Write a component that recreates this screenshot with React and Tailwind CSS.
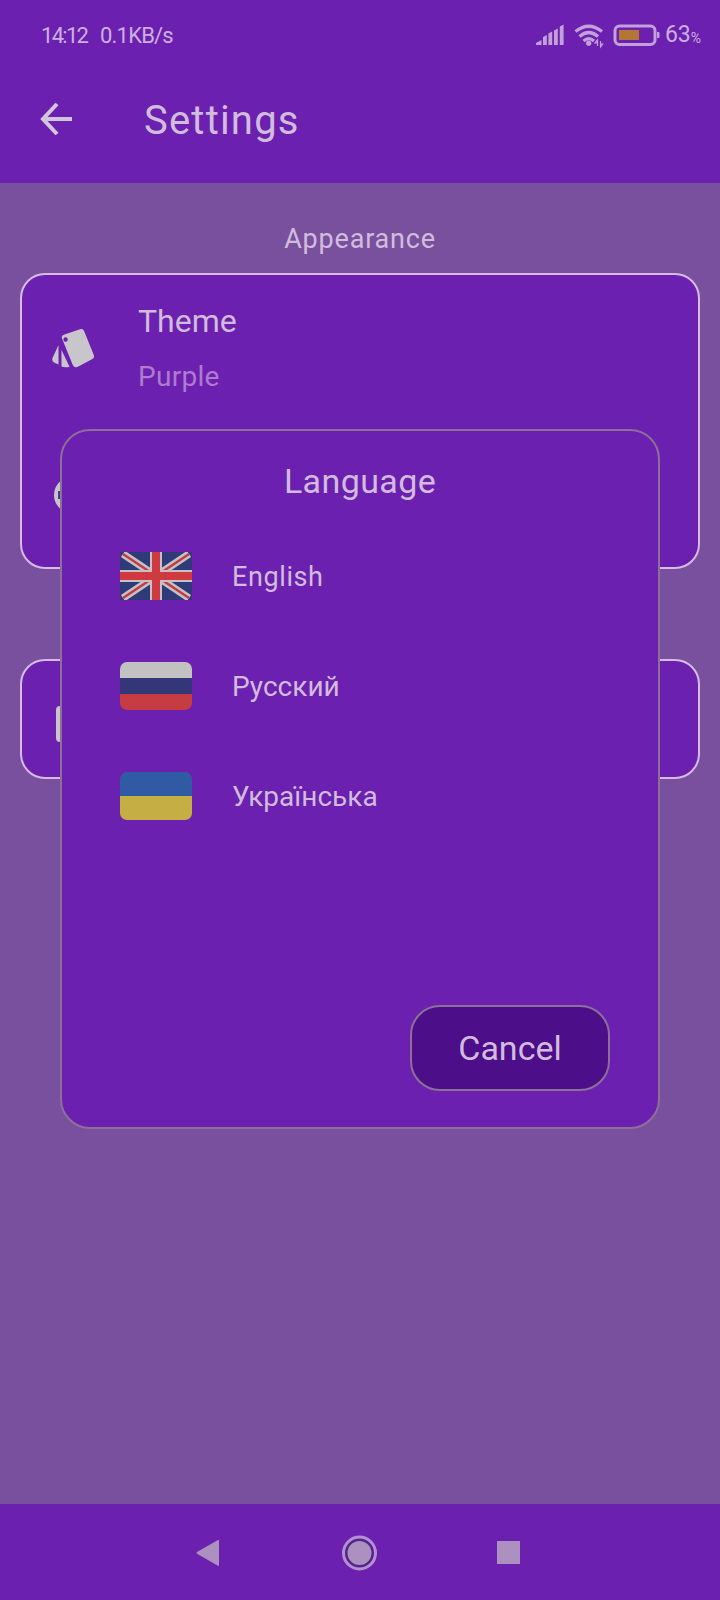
const uk = (
  <svg className="h-12 w-[72px]" viewBox="0 0 72 48">
    <rect width="72" height="48" fill="#2f3a78" />
    <path d="M3 2 69 46M69 2 3 46" stroke="#c5c1c6" strokeWidth="7.500" />
    <path d="M3 2 69 46M69 2 3 46" stroke="#c43b40" strokeWidth="2.400" />
    <path d="M36 0V48M0 24H72" stroke="#c5c1c6" strokeWidth="12" />
    <path d="M36 0V48M0 24H72" stroke="#cf3a40" strokeWidth="8" />
  </svg>
);

const ru = (
  <div className="flex h-12 w-[72px] flex-col overflow-hidden rounded-[7px]">
    <div className="flex-1 bg-[#c3c2c3]" />
    <div className="flex-1 bg-[#333679]" />
    <div className="flex-1 bg-[#c63c42]" />
  </div>
);

const ua = (
  <div className="flex h-12 w-[72px] flex-col overflow-hidden rounded-[7px]">
    <div className="flex-1 bg-[#315aa5]" />
    <div className="flex-1 bg-[#c5ae43]" />
  </div>
);

const languages = [
  { name: "English", flag: uk, style: "text-[27px] tracking-[0.6px]" },
  { name: "Русский", flag: ru, style: "text-[28px]" },
  { name: "Українська", flag: ua, style: "text-[28px]" },
];

function StatusBar() {
  return (
    <div className="flex h-[70px] items-center pr-5 pl-[41px] text-[22px] text-[#cdb0e0]">
      <span className="w-[59px] tracking-[-1.7px]">14:12</span>
      <span className="tracking-[-0.8px]">0.1KB/s</span>
      <svg className="ml-auto h-8 w-[126px]" viewBox="534 19 126 32" fill="none">
        <path
          d="M535 45v-2l5.500-3v5zM542 45v-8l3.800-2v10zM547.400 45V33.500l3.800-2V45zM553 45V30.500l3.800-2V45zM558.800 45V26.500l3.800-2V45z"
          fill="#c3a0da"
        />
        <path
          d="M574.500 31.500q13.200-10.500 26.500 0M578.500 36.500q9.200-8 18.500 0M582.500 41q5.300-4.600 10.500 0"
          stroke="#c3a0da"
          strokeWidth="3.200"
        />
        <circle cx="587.700" cy="43.200" r="2.600" fill="#c3a0da" />
        <path d="M596.500 46v-6l-2.500 3h3M599.500 41v6l2.200-3h-2" stroke="#c3a0da" strokeWidth="1.200" />
        <rect x="614" y="26" width="40" height="18.500" rx="4.500" stroke="#c3a0da" strokeWidth="3" />
        <rect x="618" y="30" width="20" height="10" fill="#b37634" />
        <path d="M656 32h1.500q1 0 1 1v4q0 1-1 1H656z" fill="#c3a0da" />
      </svg>
      <span className="ml-[4px] text-[23px]">63</span>
      <span className="mt-1.5 text-[14px] tracking-[-1px]">%</span>
    </div>
  );
}

function Dialog() {
  return (
    <div className="absolute top-[429px] left-[60px] flex h-[700px] w-[600px] flex-col rounded-[30px] border-2 border-[#8c7099] bg-[#6b20b0]">
      <h2 className="mt-[26px] text-center text-[34px] leading-[48px] tracking-[0.4px]">Language</h2>
      <ul className="mt-[16px]">
        {languages.map(({ name, flag, style }) => (
          <li key={name} className="flex h-[110px] items-center gap-10 pl-[58px]">
            {flag}
            <span className={`pt-0.5 ${style}`}>{name}</span>
          </li>
        ))}
      </ul>
      <button className="mt-auto mr-12 mb-[36px] h-[86px] w-[200px] self-end rounded-[30px] border-2 border-[#8c7099] bg-[#4c0e89] text-[34px]">
        Cancel
      </button>
    </div>
  );
}

export default function App() {
  return (
    <div className="relative flex h-[1600px] w-[720px] flex-col overflow-hidden bg-[#79509d] font-['Roboto',sans-serif] text-[#d2bcdd]">
      <header className="h-[183px] bg-[#6b20b0]">
        <StatusBar />
        <div className="flex h-[98px] items-center pl-[40px]">
          <svg className="h-8 w-8" viewBox="0 0 32 32" fill="none" stroke="#d3c5da" strokeWidth="4">
            <path d="M32 16H3M17 1 3 16l14 15" />
          </svg>
          <h1 className="mt-[3px] ml-[72px] text-[40px] tracking-[1.2px]">Settings</h1>
        </div>
      </header>

      <main className="flex flex-1 flex-col px-5">
        <h2 className="mt-[36px] text-center text-[27px] leading-[40px] tracking-[0.8px]">Appearance</h2>
        <section className="mt-[14px] h-[296px] rounded-[25px] border-2 border-[#d9bce6] bg-[#6b20b0]">
          <div className="flex h-[147px] items-center pl-[30px]">
            <svg className="h-[42px] w-[44px]" viewBox="52 327 44 42" fill="#c9c6cb">
              <path
                fillRule="evenodd"
                d="M64.500 333.500 80 328.200q3-1 4.200 2l9.500 23.500q1.200 3-1.800 4.500l-14.500 7.700q-3 1.300-4.500-1.700L62 337.500q-1.200-3 2.500-4zM67.800 338.500a2.200 2.200 0 1 0-4.400 0 2.200 2.200 0 0 0 4.400 0z"
              />
              <path d="M61.500 349v16.500q3 1.500 8 .3zM58.500 344v19.500L54 361.500q-2.500-1.500-1.500-4.500z" />
            </svg>
            <div className="ml-[42px] flex flex-col gap-[14px]">
              <span className="text-[32px] leading-[40px]">Theme</span>
              <span className="pt-0.5 text-[28px] leading-[40px] tracking-[0.3px] text-[#ae7bce]">Purple</span>
            </div>
          </div>
          <div className="flex h-[145px] items-center pl-[32px]">
            <svg className="h-9 w-9" viewBox="0 0 36 36">
              <circle cx="18" cy="18" r="18" fill="#c9c6cb" />
              <rect x="4" y="14" width="8" height="8" fill="#48407c" />
            </svg>
          </div>
        </section>
        <section className="mt-[90px] flex h-[120px] items-center rounded-[25px] border-2 border-[#d9bce6] bg-[#6b20b0] pl-[34px]">
          <div className="mt-2.5 h-9 w-9 rounded bg-[#c9c6cb]" />
        </section>
      </main>

      <nav className="flex h-24 items-center bg-[#6b20b0] pt-px pl-[196px]">
        <svg className="h-7 w-6" viewBox="0 0 24 28" fill="#ac91c0">
          <path d="M1 13 22 1q1-.5 1 1v24q0 1.300-1 .8L1 14.800q-1-.8 0-1.800z" />
        </svg>
        <svg className="ml-[121px] h-9 w-9" viewBox="0 0 36 36">
          <circle cx="18.500" cy="18" r="16" fill="#6b20b0" stroke="#b590ce" strokeWidth="3" />
          <circle cx="18.500" cy="18" r="13" fill="#ac91c0" stroke="#4d2789" strokeWidth="2" />
        </svg>
        <div className="ml-[120px] h-[23px] w-[23px] bg-[#ac91c0]" />
      </nav>
      <Dialog />
    </div>
  );
}
